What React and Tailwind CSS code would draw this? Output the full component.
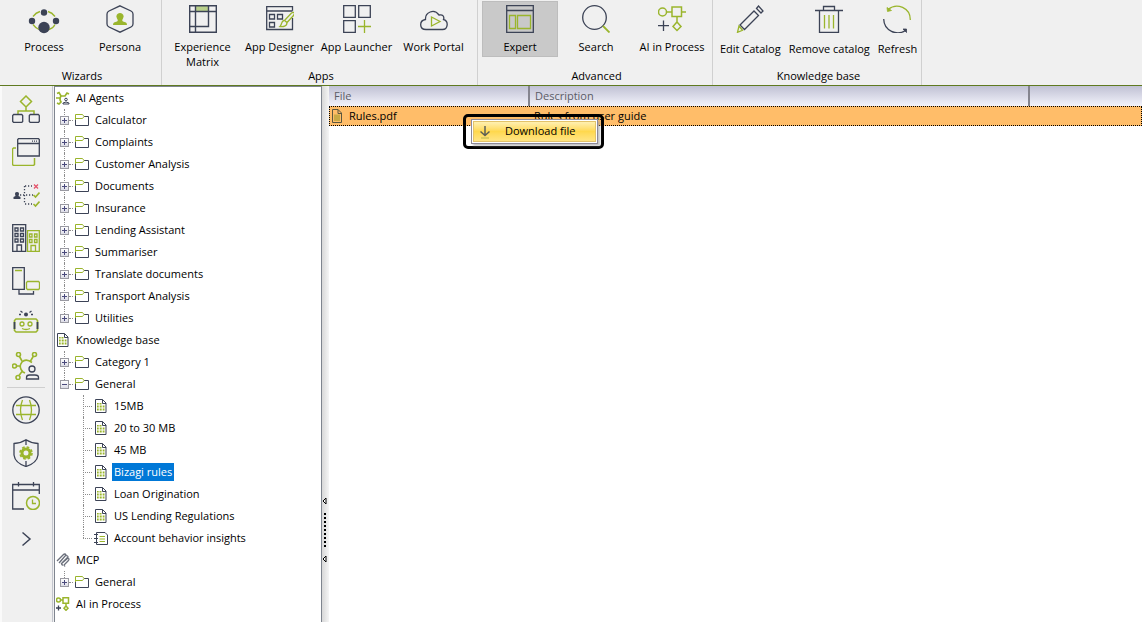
import { clsx } from "clsx";

const NAVY = "#3c4356";
const GREEN = "#9ab52c";

const Icon = ({ size = 28, stroke = 1.3, children, className }) => (
  <svg
    width={size}
    height={size}
    viewBox={`0 0 ${size} ${size}`}
    fill="none"
    stroke={NAVY}
    strokeWidth={stroke}
    className={clsx("block shrink-0", className)}
    aria-hidden="true"
  >
    {children}
  </svg>
);

/* Ribbon icons */

const ProcessIcon = () => (
  <Icon size={32}>
    <path d="M5 13.500q3-4 7-5M20 8.500q4 1 7 5M5 21.500q3 4 6 5M21 26.500q4-1 6-5" stroke={GREEN} />
    <g fill={NAVY} stroke="none">
      <circle cx="16" cy="9.500" r="3.200" />
      <circle cx="4" cy="18" r="3.200" />
      <circle cx="28" cy="18" r="3.200" />
      <circle cx="16" cy="24.500" r="5.700" />
    </g>
  </Icon>
);

const PersonaIcon = () => (
  <Icon>
    <path d="M14 .8l11 5.200q2 1 2 3v10q0 2-2 3l-11 5.200L3 22q-2-1-2-3V9q0-2 2-3z" />
    <path d="M14 8a3.500 3.500 0 0 1 3 5.500c-1 1.500-1 2.500 0 3l3 1q1 .5 1 2.500H7q0-2 1-2.500l3-1c1-.5 1-1.500 0-3A3.500 3.500 0 0 1 14 8z" fill={GREEN} stroke="none" />
  </Icon>
);

const MatrixIcon = () => (
  <Icon>
    <path d="M6.500 1h13v5h-13z" fill="#b9d08b" stroke="none" />
    <path d="M.7.7h26.600v26.600H.7zM6.500.7v26.600M.7 6.500h26.600M19.500.7v20.800H.7" strokeWidth="1.400" />
  </Icon>
);

const DesignerIcon = () => (
  <Icon>
    <path d="M26.500 13v11.500H.7V1.700h25.800v4M.7 6h25.800M3.500 9.500h5v4.500h-5zM11.500 9.500h5v4.500h-5zM3.500 17.500h5V22h-5z" />
    <path d="M25.500 8q2.500-1.500 3 .5l-1 2-6.500 7-2.500-2zM18 15.500c-3 .5-2 4.500-4 6 3 .5 7 0 7-4" stroke={GREEN} fill="#f0f0f0" />
  </Icon>
);

const LauncherIcon = () => (
  <Icon>
    <path d="M.7.7h11.600v11.600H.7zM15.700.7h11.600v11.600H15.700zM.7 15.700h11.600v11.600H.7z" />
    <path d="M21.500 15v13M15 21.500h13" stroke={GREEN} />
  </Icon>
);

const PortalIcon = () => (
  <Icon>
    <path d="M6 24.500c-7 0-7-9-.5-10C5 7.500 14 3 19 10c4-1 5.500 2 4.500 4.500C29 16 28 24.500 22.500 24.500z" />
    <path d="M11.500 12v9l8.500-4.500z" stroke={GREEN} />
  </Icon>
);

const ExpertIcon = () => (
  <Icon>
    <path d="M.7.7h26.600v26.600H.7zM.7 5.500h26.600" />
    <path d="M3.500 10.500h6v13h-6zM11.500 10.500h13v13h-13z" stroke={GREEN} />
  </Icon>
);

const SearchIcon = () => (
  <Icon>
    <circle cx="12.500" cy="12.500" r="11.800" />
    <path d="M21 21l6.500 6.500" stroke={GREEN} strokeWidth="1.800" />
  </Icon>
);

const AiProcessIcon = () => (
  <Icon>
    <g stroke={GREEN} strokeWidth="1.500">
      <circle cx="4.500" cy="7" r="4" />
      <path d="M8.500 7H14M14 2h9.500v9.500H14zM23.500 7H28M19 11.500V17M19 17l4 4.500-4 4-4-4z" />
    </g>
    <path d="M5.500 15.500v10.500M0 20.700h11" />
  </Icon>
);

const EditIcon = () => (
  <Icon>
    <path d="M4 20L18 6l4.500 4.500L8.500 24.500zM20.500 3.500l2-2.500 4.500 5-2 2z" />
    <path d="M3 21L1.500 27.300l5-2z" stroke={GREEN} />
  </Icon>
);

const TrashIcon = () => (
  <Icon>
    <path d="M0 5.500h28M4.500 5.500v22h19v-22M8.500 5V1.500h11V5" />
    <path d="M9.500 10v13.500M14 10v13.500M18.500 10v13.500" stroke={GREEN} />
  </Icon>
);

const RefreshIcon = () => (
  <Icon>
    <path d="M5 4.500C14-3 27.500 3 27.300 15" stroke={GREEN} />
    <path d="M4 2.500l.5 4 4-1z" fill={GREEN} stroke={GREEN} strokeWidth=".8" />
    <path d="M.7 14C1 26 14 31 22.500 25.500" />
    <path d="M23.500 27.500l0-3.500-3.500 0z" fill={NAVY} strokeWidth=".8" />
  </Icon>
);

/* Sidebar icons */

const FlowIcon = () => (
  <Icon>
    <path d="M14 1l5.500 5.500L14 12 8.500 6.500zM14 12v4M6 19v-3h16v3" stroke={GREEN} strokeWidth="1.500" />
    <path d="M1.700 19.500h8l1 1v6l-1 1h-8l-1-1v-6zM18.300 19.500h8l1 1v6l-1 1h-8l-1-1v-6z" />
  </Icon>
);

const WindowsIcon = () => (
  <Icon>
    <path d="M4 10H1.500l-1 1v15.500l1 1h20l1-1V20" stroke={GREEN} strokeWidth="1.500" />
    <path d="M6.500.7h20l.8.800v16.500H5.700V1.500zM5.700 5.500h21.600" />
    <path d="M20 3.200h6" strokeDasharray="1 1" />
  </Icon>
);

const RulesIcon = () => (
  <Icon>
    <path d="M8 14h13M12.500 5v18M13 5h7M13 23h7" strokeDasharray="1.200 1.800" />
    <path d="M5 11q3 0 1.500 4l2 1v2h-7v-2l2-1Q2 11 5 11z" fill={NAVY} stroke="none" />
    <path d="M22 3.500l4 4m0-4l-4 4" stroke="#e5536b" />
    <path d="M21.500 14l2 2 4-4.500M21.500 23l2 2 4-4.500" stroke={GREEN} strokeWidth="1.600" />
  </Icon>
);

const BuildingsIcon = () => (
  <Icon>
    <path d="M.7.7h13v26.600H.7zM3 4h3v3H3zM8.500 4h3v3h-3zM3 9.500h3v3H3zM8.500 9.500h3v3h-3zM3 15h3v3H3zM8.500 15h3v3h-3zM5 27v-6h4.500v6" />
    <path d="M15.500 6.700h11.800v20.600H15.500zM17.500 10h2.500v3h-2.500zM22.500 10h2.500v3h-2.500zM17.500 15.500h2.500v3h-2.500zM22.500 15.500h2.500v3h-2.500zM19 27v-5.500h4.500V27" stroke={GREEN} />
  </Icon>
);

const DevicesIcon = () => (
  <Icon>
    <path d="M.7.7h11.600v21.600H.7zM7 22v5h14.500v-3" />
    <path d="M3 3.500h7M15.500 14.500h11l1 1v6l-1 1h-11l-1-1v-6z" stroke={GREEN} />
  </Icon>
);

const RobotIcon = () => (
  <Icon>
    <circle cx="14" cy="4.500" r="2" fill={NAVY} stroke="none" />
    <path d="M8.500 1l2 1.500M19.500 1l-2 1.500M7 4.500h2M19 4.500h2" />
    <path d="M4 9h20l1.500 1.500v10L24 22H4l-1.500-1.500v-10z" stroke={GREEN} strokeWidth="1.600" />
    <circle cx="10" cy="14" r="2" stroke={GREEN} />
    <circle cx="18" cy="14" r="2" stroke={GREEN} />
    <path d="M10 18.500q4 2 8 0" stroke={GREEN} />
    <path d="M2.500 12v7M25.500 12v7" strokeWidth="1.800" />
  </Icon>
);

const AgentsIcon = () => (
  <Icon>
    <g stroke={GREEN} strokeWidth="1.600">
      <circle cx="6.500" cy="2.500" r="2" />
      <circle cx="22.500" cy="2.500" r="2" />
      <circle cx="2.500" cy="14" r="2" />
      <circle cx="6" cy="25.500" r="2" />
      <path d="M7.500 4.500L10 9M21.500 4l-3 5M4.500 14H8M7 23.500l3-4M20 10.500Q14 6 10 10q-4 5 1 10l2 1" />
    </g>
    <circle cx="20" cy="17" r="3" />
    <path d="M14.500 27v-1.500q0-2.500 3-2.500h5.500q3.500 0 3.500 2.500V27z" />
  </Icon>
);

const GlobeIcon = () => (
  <Icon>
    <circle cx="14" cy="14" r="13.200" />
    <path d="M10.500 4Q6.500 14 10.500 24M17.500 4q4 10 0 20M4 9.500h20M4 18.500h20" stroke={GREEN} />
  </Icon>
);

const ShieldIcon = () => (
  <Icon>
    <path d="M14 .7Q19 4 26 4.500V16q-1 8-12 11.500Q3 24 2 16V4.500Q9 4 14 .7zM14 1v5M14 22v5" />
    <circle cx="14" cy="14" r="4" stroke={GREEN} strokeWidth="3" />
    <circle cx="14" cy="14" r="6" stroke={GREEN} strokeWidth="1.600" strokeDasharray="2.700 2" />
  </Icon>
);

const CalendarIcon = () => (
  <Icon>
    <path d="M12 27H.7V2.500h26.600V12M.7 8h26.600M6.500 0v4.500M21.500 0v4.500" />
    <circle cx="21" cy="21" r="6.500" stroke={GREEN} strokeWidth="1.500" />
    <path d="M20.500 17.500v4H24" stroke={GREEN} />
  </Icon>
);

const ChevronIcon = () => (
  <Icon>
    <path d="M10.500 7.500L18 14l-7.500 6.500" strokeWidth="1.500" />
  </Icon>
);

/* Tree icons */

const FolderIcon = () => (
  <Icon size={14} stroke={1}>
    <path d="M.5 6v6.500h13v-9H9" />
    <path d="M.5 7V1.500h7l1.500 2-1.500 2h-7" stroke={GREEN} />
  </Icon>
);

const CatalogIcon = () => (
  <Icon size={14} stroke={1}>
    <path d="M1.500.5h7l3.500 3.500v9.500H1.500zM8.500.5V4.500h3.500" />
    <path
      d="M5.500 4h2v1.500h-2zM3 4h1.700v1.500H3zM3 6.500h1.700v2H3zM5.700 6.500h2v2h-2zM8.700 6.500h1.800v2H8.700zM3 9.500h1.700v2H3zM5.700 9.500h2v2h-2zM8.700 9.500h1.800v2H8.700z"
      fill={GREEN}
      stroke="none"
    />
  </Icon>
);

const InsightsIcon = () => (
  <Icon size={14} stroke={1}>
    <path d="M2.500 1.500h8.500l2.500 2.500v9.500h-11zM0 3.500h4M0 7.500h4M0 11.500h4" />
    <path d="M5.500 5.500H11M5.500 8H11M5.500 10.500H11" stroke={GREEN} />
  </Icon>
);

const ClipIcon = () => (
  <Icon size={14}>
    <path d="M1 8l6-6q2-2 3 0l-6 7M3 10l6-7q3-1 3 1l-6 6q-1 2 1 2M5 11l7-6q2 1 0 3l-4 4 1 1.500" stroke="#6a6f7b" />
  </Icon>
);

const SmallAgentsIcon = () => (
  <Icon size={14} stroke={1}>
    <path d="M1 2.500l2-1 2 3.500h4l2-3 2 1M0 7h4M5 5Q3 8 5 11l-2 2-2-1" stroke={GREEN} strokeWidth="1.700" />
    <circle cx="10" cy="8.500" r="1.300" />
    <path d="M7 13v-1q3-2 6 0v1z" />
  </Icon>
);

const SmallProcessIcon = () => (
  <Icon size={14}>
    <g stroke={GREEN} strokeWidth="1.500">
      <circle cx="2.500" cy="3" r="2" />
      <path d="M5 3h2M7 .8h5.500v5.400H7zM10 6.500V9M10 9l2 2.300-2 2-2-2z" />
    </g>
    <path d="M2.500 8.500v5M0 11h5" />
  </Icon>
);

const PdfIcon = () => (
  <Icon size={14} stroke={1}>
    <path d="M1.500.5h5.500l3.500 3.500v9.500h-9zM7 .5V4.500h3.500" stroke="#5b573f" />
    <path d="M3 5.500h6v6.500H3z" fill="#c9a945" stroke="none" />
  </Icon>
);

const DownloadIcon = () => (
  <Icon size={14}>
    <path d="M7 1v9.500M2.500 6.500L7 10.500l4.500-4" stroke="#5c5f55" strokeWidth="1.500" />
    <path d="M3 13h8" stroke="#b7b84a" strokeWidth="1" />
  </Icon>
);

const ribbon = [
  {
    title: "Wizards",
    width: "w-[162px]",
    padding: "pl-[6px] pr-[3px]",
    items: [
      { label: "Process", icon: ProcessIcon },
      { label: "Persona", icon: PersonaIcon },
    ],
  },
  {
    title: "Apps",
    width: "w-[316px]",
    padding: "pl-[2px] pr-[5px]",
    items: [
      { label: "Experience Matrix", icon: MatrixIcon },
      { label: "App Designer", icon: DesignerIcon },
      { label: "App Launcher", icon: LauncherIcon },
      { label: "Work Portal", icon: PortalIcon },
    ],
  },
  {
    title: "Advanced",
    width: "w-[235px]",
    padding: "pl-1 pr-[2px]",
    items: [
      { label: "Expert", icon: ExpertIcon, active: true },
      { label: "Search", icon: SearchIcon },
      { label: "AI in Process", icon: AiProcessIcon },
    ],
  },
  {
    title: "Knowledge base",
    width: "w-[209px]",
    padding: "justify-center gap-2 pl-[3px]",
    auto: true,
    items: [
      { label: "Edit Catalog", icon: EditIcon },
      { label: "Remove catalog", icon: TrashIcon },
      { label: "Refresh", icon: RefreshIcon },
    ],
  },
];

const sidebar = [
  { label: "Processes", icon: FlowIcon },
  { label: "Forms", icon: WindowsIcon },
  { label: "Rules", icon: RulesIcon },
  { label: "Organization", icon: BuildingsIcon },
  { label: "Systems", icon: DevicesIcon },
  { label: "Bots", icon: RobotIcon },
  { label: "Agents", icon: AgentsIcon, divider: true },
  { label: "Global", icon: GlobeIcon },
  { label: "Security", icon: ShieldIcon },
  { label: "Schedule", icon: CalendarIcon },
  { label: "More", icon: ChevronIcon },
];

const tree = [
  {
    label: "AI Agents",
    icon: SmallAgentsIcon,
    children: [
      { label: "Calculator" },
      { label: "Complaints" },
      { label: "Customer Analysis" },
      { label: "Documents" },
      { label: "Insurance" },
      { label: "Lending Assistant" },
      { label: "Summariser" },
      { label: "Translate documents" },
      { label: "Transport Analysis" },
      { label: "Utilities" },
    ],
  },
  {
    label: "Knowledge base",
    icon: CatalogIcon,
    children: [
      { label: "Category 1" },
      {
        label: "General",
        children: [
          { label: "15MB", icon: CatalogIcon },
          { label: "20 to 30 MB", icon: CatalogIcon },
          { label: "45 MB", icon: CatalogIcon },
          { label: "Bizagi rules", icon: CatalogIcon, selected: true },
          { label: "Loan Origination", icon: CatalogIcon },
          { label: "US Lending Regulations", icon: CatalogIcon },
          { label: "Account behavior insights", icon: InsightsIcon },
        ],
      },
    ],
  },
  { label: "MCP", icon: ClipIcon, children: [{ label: "General" }] },
  { label: "AI in Process", icon: SmallProcessIcon },
];

const RibbonGroup = ({ group }) => (
  <section
    className={clsx(
      "flex shrink-0 flex-col border-r border-[#d0d0d0]",
      group.width,
    )}
  >
    <div className={clsx("flex flex-1", group.padding)}>
      {group.items.map(({ label, icon: ItemIcon, active }) => (
        <button
          key={label}
          className={clsx(
            "mt-px flex h-14 flex-col items-center leading-[15px]",
            group.auto ? "whitespace-nowrap" : "min-w-0 flex-1",
            active && "bg-[#c9c9c9] outline -outline-offset-1 outline-[#bdbdbd]",
          )}
        >
          <span className="flex h-9 shrink-0 items-center justify-center">
            <ItemIcon />
          </span>
          <span className={group.auto ? "pt-1" : "pt-[2px]"}>{label}</span>
        </button>
      ))}
    </div>
    <h2 className="pl-[3px] text-center leading-[18px]">{group.title}</h2>
  </section>
);

const Expander = ({ open }) => (
  <button
    aria-label={open ? "Collapse" : "Expand"}
    className="relative block size-[9px] shrink-0 border border-[#9a9aa2] bg-linear-to-b from-white to-[#dcdce6]"
  >
    <svg viewBox="0 0 7 7" className="block size-[7px]" stroke="#4a4a7c">
      <path d={open ? "M1 3.500h5" : "M1 3.500h5M3.500 1v5"} />
    </svg>
  </button>
);

const Leaf = ({ node, last }) => {
  const LeafIcon = node.icon;
  return (
    <li className="relative flex h-[22px] items-center">
      <span
        className={clsx(
          "absolute top-0 left-0 border-l border-dotted border-[#8d8d8d]",
          last ? "h-[11px]" : "h-full",
        )}
      />
      <span className="mr-[2px] w-[9px] border-t border-dotted border-[#8d8d8d]" />
      <LeafIcon />
      <span
        className={clsx(
          "ml-1 px-[2px] leading-[18px]",
          node.selected && "bg-[#0078d7] text-white",
        )}
      >
        {node.label}
      </span>
    </li>
  );
};

const Branch = ({ node, last }) => (
  <li className="relative">
    <span
      className={clsx(
        "absolute top-0 left-1 border-l border-dotted border-[#8d8d8d]",
        last ? "h-[11px]" : "h-full",
      )}
    />
    <div className="flex h-[22px] items-center">
      <Expander open={Boolean(node.children)} />
      <span className="mr-[2px] w-1 border-t border-dotted border-[#8d8d8d]" />
      <FolderIcon />
      <span className="pl-[6px]">{node.label}</span>
    </div>
    {node.children && (
      <ul className="pl-[23px]">
        {node.children.map((child, i) => (
          <Leaf
            key={child.label}
            node={child}
            last={i === node.children.length - 1}
          />
        ))}
      </ul>
    )}
  </li>
);

const Root = ({ node }) => {
  const RootIcon = node.icon;
  return (
    <li>
      <div className="flex h-[22px] items-center pl-px">
        <RootIcon />
        <span className="pl-[6px]">{node.label}</span>
      </div>
      {node.children && (
        <ul className="pl-[5px]">
          {node.children.map((child, i) => (
            <Branch
              key={child.label}
              node={child}
              last={i === node.children.length - 1}
            />
          ))}
        </ul>
      )}
    </li>
  );
};

const SplitterArrow = () => (
  <svg width="5" height="8" viewBox="0 0 5 8" className="block">
    <path d="M4 1v6L1 4z" fill="#fff" stroke="#000" />
  </svg>
);

const Splitter = () => (
  <div className="flex w-[7px] shrink-0 flex-col items-center justify-end gap-2 bg-linear-to-r from-[#d8d8d8] to-[#f5f5f5] pr-[2px] pb-[59px]">
    <SplitterArrow />
    <span className="h-[34px] border-l-2 border-dotted border-black" />
    <SplitterArrow />
  </div>
);

const headCell =
  "border-r-2 border-[#85858f] px-[5px] py-0 text-left font-normal text-[#5c5c66]";

const FileTable = () => (
  <main className="relative min-w-0 flex-1 bg-white">
    <table className="w-full table-fixed border-separate border-spacing-0">
      <thead>
        <tr className="h-5 bg-linear-to-b from-[#c0c1d4] to-[#f3f3fb]">
          <th className={clsx(headCell, "w-[201px]")}>File</th>
          <th className={clsx(headCell, "w-[500px]")}>Description</th>
          <th aria-label="Other" />
        </tr>
      </thead>
      <tbody>
        <tr className="h-5 bg-[#ffbd69] outline -outline-offset-1 outline-dotted outline-black">
          <td className="p-0">
            <div className="flex items-center gap-1 pl-[2px]">
              <PdfIcon />
              Rules.pdf
            </div>
          </td>
          <td className="px-1 py-0">Rules from user guide</td>
          <td className="p-0" />
        </tr>
      </tbody>
    </table>
    <div className="absolute top-7 left-[134px] w-[141px] rounded-[5px] border-3 border-black py-[2px] pr-[3px] pl-[5px]">
      <button className="flex h-[25px] w-full items-center border border-[#8d8a99] bg-white p-px shadow-[2px_2px_2px_#9999]">
        <span className="flex h-full w-full items-center gap-[13px] border border-[#e3c36a] bg-linear-to-b from-[#fff0b0] via-[#ffd84d] to-[#ffe583] pl-1">
          <DownloadIcon />
          Download file
        </span>
      </button>
    </div>
  </main>
);

export default function App() {
  return (
    <div className="flex h-screen flex-col overflow-hidden bg-[#f0f0f0] font-['Open_Sans','Noto_Sans',sans-serif] text-[11px] text-black">
      <header className="flex h-[86px] shrink-0 border-b border-[#5f7a20]">
        {ribbon.map((group) => (
          <RibbonGroup key={group.title} group={group} />
        ))}
      </header>
      <div className="flex min-h-0 flex-1">
        <nav className="flex w-[53px] shrink-0 flex-col items-center border-r border-l-2 border-r-[#c4c6ce] border-l-[#fafafa] pt-px pr-[2px]">
          {sidebar.map(({ label, icon: NavIcon, divider }) => (
            <button
              key={label}
              aria-label={label}
              className={clsx(
                "flex h-[43px] w-[38px] shrink-0 items-center justify-center",
                divider && "border-b border-[#cfcfcf]",
              )}
            >
              <NavIcon />
            </button>
          ))}
        </nav>
        <aside className="ml-px w-[268px] shrink-0 border-x border-t border-[#7f858f] bg-white">
          <ul>
            {tree.map((node) => (
              <Root key={node.label} node={node} />
            ))}
          </ul>
        </aside>
        <Splitter />
        <FileTable />
      </div>
    </div>
  );
}
